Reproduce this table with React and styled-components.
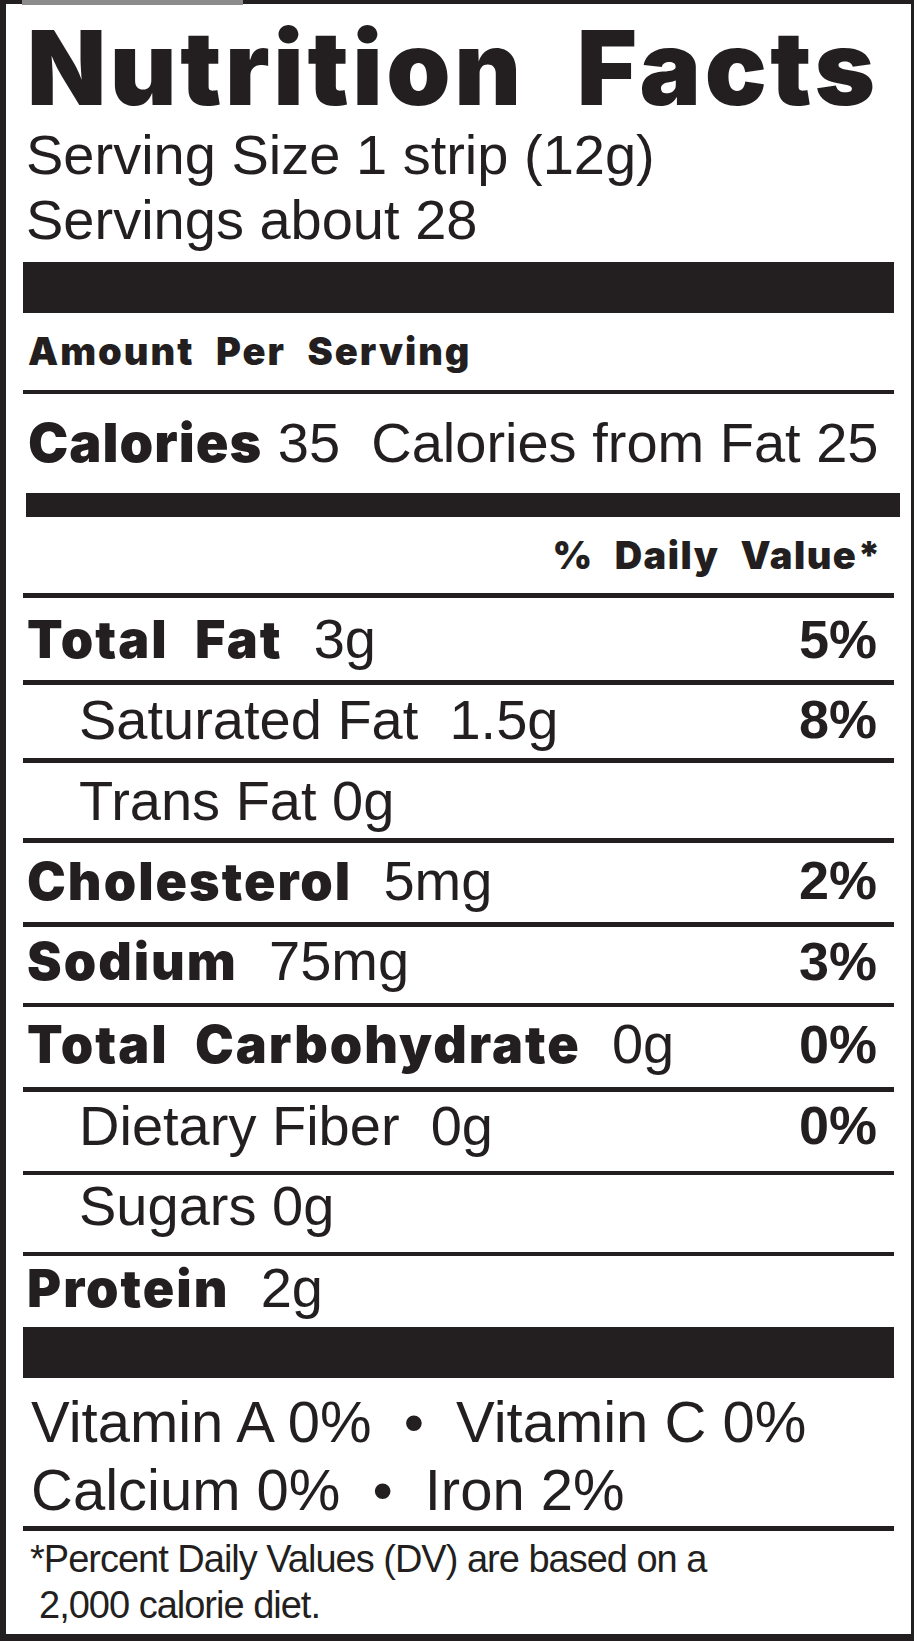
import React from "react";
import styled, { createGlobalStyle } from "styled-components";

const ink = "#231f20";

const GlobalStyle = createGlobalStyle`
  html, body {
    margin: 0;
    padding: 0;
    background: #ffffff;
  }
  body {
    font-family: "Liberation Sans", Arial, sans-serif;
    color: ${ink};
  }
`;

const Label = styled.div`
  position: relative;
  width: 914px;
  height: 1641px;
  box-sizing: border-box;
  border-style: solid;
  border-color: ${ink};
  border-width: 4px 3px 7px 6px;
  padding: 0 17px;
  display: flex;
  flex-direction: column;
  background: #ffffff;
`;

// scanner smudge on the top edge
const Scuff = styled.div`
  position: absolute;
  top: -4px;
  left: 16px;
  width: 221px;
  height: 5px;
  background: #8c8c8c;
`;

const Title = styled.h1`
  margin: 14px 0 4px;
  padding-left: 4px;
  font-family: "Inter", "Liberation Sans", sans-serif;
  font-weight: 900;
  font-size: 103px;
  line-height: 100px;
  letter-spacing: 3.6px;
  word-spacing: 28px;
  white-space: nowrap;
`;

const Serving = styled.div`
  padding-left: 3px;
  font-size: 56px;
  line-height: 65px;
  white-space: nowrap;
`;

const Bar = styled.div`
  height: ${(p) => p.$h}px;
  margin: ${(p) => p.$m || "0"};
  background: ${ink};
`;

const Rule = styled.div`
  height: ${(p) => p.$w || 5}px;
  background: ${ink};
`;

const Heavy = styled.span`
  font-family: "Inter", "Liberation Sans", sans-serif;
  font-weight: 900;
  font-size: ${(p) => p.$size || 52}px;
  letter-spacing: ${(p) => p.$ls ?? 2}px;
  word-spacing: ${(p) => p.$ws ?? 14}px;
`;

const Caption = styled.div`
  height: ${(p) => p.$h}px;
  line-height: ${(p) => p.$h}px;
  padding-left: 5px;
  padding-right: ${(p) => (p.$right ? 12 : 17)}px;
  text-align: ${(p) => (p.$right ? "right" : "left")};
  white-space: nowrap;
`;

const Row = styled.div`
  display: flex;
  justify-content: space-between;
  box-sizing: border-box;
  height: ${(p) => p.$h}px;
  padding: 0 17px ${(p) => p.$pb || 0}px ${(p) => (p.$sub ? 56 : 4)}px;
  line-height: ${(p) => p.$h - (p.$pb || 0)}px;
  font-size: 56px;
  white-space: nowrap;
`;

const Pct = styled.span`
  font-weight: 700;
  font-size: 54px;
`;

const Vitamins = styled.div`
  padding: 10px 0 2px 8px;
  font-size: 58px;
  line-height: 68px;
  white-space: nowrap;
`;

const Dot = styled.span`
  margin: 0 32px;
`;

const Footnote = styled.div`
  padding: 5px 0 0 7px;
  font-size: 38px;
  line-height: 46px;
  letter-spacing: -1px;
  white-space: nowrap;
`;

const Indent = styled.div`
  padding-left: 9px;
`;

const nutrients = [
  { name: "Total Fat", amount: "3g", pct: "5%", h: 82, rule: 5 },
  { name: "Saturated Fat  1.5g", pct: "8%", sub: true, h: 73, pb: 4, rule: 5 },
  { name: "Trans Fat 0g", sub: true, h: 75, rule: 5 },
  { name: "Cholesterol", amount: "5mg", pct: "2%", h: 79, pb: 4, rule: 5 },
  { name: "Sodium", amount: "75mg", pct: "3%", h: 76, pb: 8, rule: 4 },
  { name: "Total Carbohydrate", amount: "0g", pct: "0%", h: 80, pb: 6, rule: 5 },
  { name: "Dietary Fiber  0g", pct: "0%", sub: true, h: 79, pb: 12, rule: 4 },
  { name: "Sugars 0g", sub: true, h: 77, pb: 16, rule: 4 },
  { name: "Protein", amount: "2g", h: 71, pb: 8 },
];

export default function App() {
  return (
    <>
      <GlobalStyle />
      <Label>
        <Scuff />
        <Title>Nutrition Facts</Title>
        <Serving>
          Serving Size 1 strip (12g)
          <br />
          Servings about 28
        </Serving>
        <Bar $h={51} $m="10px 0 0" />
        <Caption $h={77}>
          <Heavy $size={38} $ls={2} $ws={12}>
            Amount Per Serving
          </Heavy>
        </Caption>
        <Rule $w={4} />
        <Row $h={99} $pb={2} style={{ paddingLeft: 5 }}>
          <span>
            <Heavy $size={54} $ls={1}>
              Calories
            </Heavy>{" "}
            35{"\u00a0\u00a0"}Calories from Fat 25
          </span>
        </Row>
        <Bar $h={24} $m="0 -6px 0 3px" />
        <Caption $h={76} $right>
          <Heavy $size={38} $ls={1.5} $ws={12}>
            % Daily Value*
          </Heavy>
        </Caption>
        <Rule $w={5} />
        {nutrients.map((n) => (
          <React.Fragment key={n.name}>
            <Row $h={n.h} $pb={n.pb} $sub={n.sub}>
              <span>
                {n.sub ? (
                  n.name.replace(/  /g, "\u00a0\u00a0")
                ) : (
                  <>
                    <Heavy>{n.name}</Heavy>
                    {"\u00a0\u00a0"}
                    {n.amount}
                  </>
                )}
              </span>
              {n.pct && <Pct>{n.pct}</Pct>}
            </Row>
            {n.rule && <Rule $w={n.rule} />}
          </React.Fragment>
        ))}
        <Bar $h={51} />
        <Vitamins>
          Vitamin A 0%<Dot>•</Dot>Vitamin C 0%
          <br />
          Calcium 0%<Dot>•</Dot>Iron 2%
        </Vitamins>
        <Rule $w={5} />
        <Footnote>
          *Percent Daily Values (DV) are based on a
          <Indent>2,000 calorie diet.</Indent>
        </Footnote>
      </Label>
    </>
  );
}
